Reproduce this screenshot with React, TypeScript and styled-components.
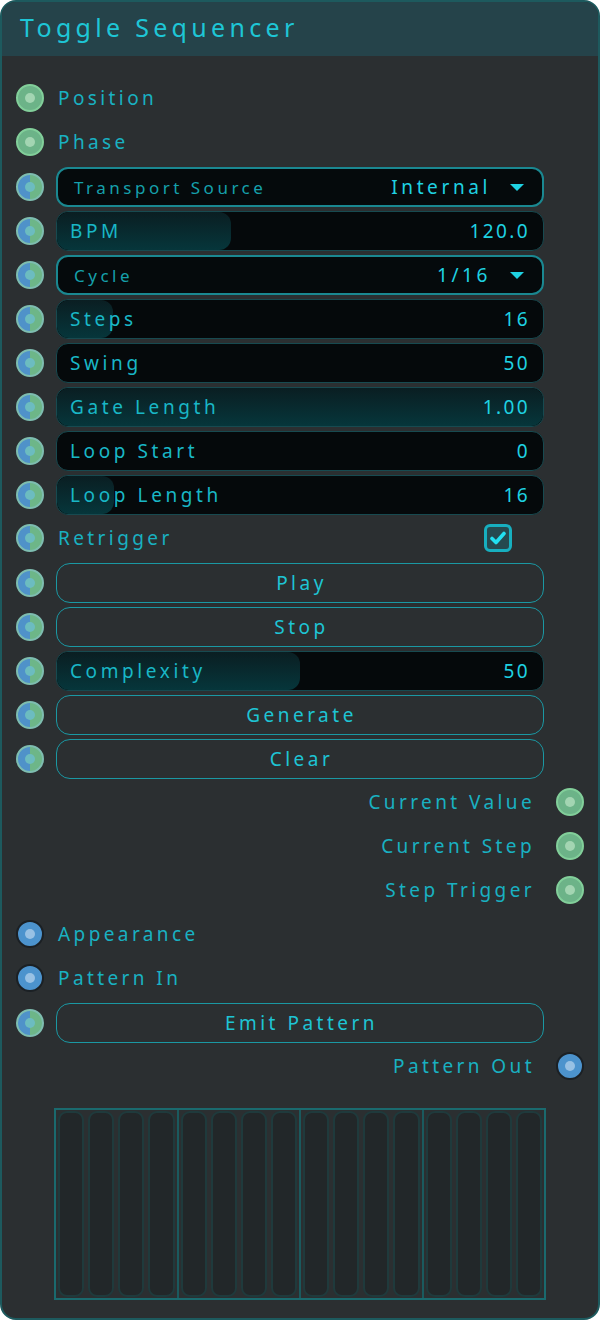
import React from "react";
import styled, { createGlobalStyle, css } from "styled-components";

const Global = createGlobalStyle`
  html, body { margin: 0; padding: 0; background: #ffffff; }
  * { box-sizing: border-box; }
  body { font-family: "Noto Sans", "DejaVu Sans", sans-serif; }
`;

const Node = styled.div`
  width: 600px;
  height: 1320px;
  border: 2px solid #1d5a5e;
  border-radius: 16px;
  background: #2b2f31;
  overflow: hidden;
  display: flex;
  flex-direction: column;
`;

const Header = styled.div`
  height: 54px;
  background: #25434a;
  display: flex;
  align-items: center;
  padding-left: 18px;
  flex-shrink: 0;
`;

const Title = styled.div`
  color: #1ec6d6;
  font-size: 25px;
  letter-spacing: 4.3px;
  padding-bottom: 5px;
`;

const Body = styled.div`
  padding: 23px 14px 18px 14px;
  display: flex;
  flex-direction: column;
  gap: 6px;
  flex: 1;
`;

const Row = styled.div`
  display: grid;
  grid-template-columns: 28px 1fr 28px;
  column-gap: 12px;
  height: 38px;
  align-items: center;
`;

type PortKind = "green" | "split" | "blue";

const Port = styled.div<{ $kind: PortKind }>`
  width: 28px;
  height: 28px;
  border-radius: 50%;
  position: relative;
  ${(p) =>
    p.$kind === "green"
      ? css`
          background: #6cb388;
          border: 2px solid #82cf9a;
        `
      : p.$kind === "blue"
      ? css`
          background: #4c93cd;
          border: 2px solid #1b2024;
        `
      : css`
          background: linear-gradient(90deg, #4f92c9 50%, #6db688 50%);
          border: 2px solid #7ebdb0;
        `}
  &::after {
    content: "";
    position: absolute;
    left: 50%;
    top: 50%;
    width: 10px;
    height: 10px;
    margin: -5px 0 0 -5px;
    border-radius: 50%;
    background: ${(p) =>
      p.$kind === "green" ? "#a3d5b2" : p.$kind === "blue" ? "#98c1e4" : "#6cbcc0"};
  }
`;

const Label = styled.div<{ $right?: boolean }>`
  color: #19b1c1;
  font-size: 19px;
  letter-spacing: 3.4px;
  white-space: nowrap;
  padding-left: ${(p) => (p.$right ? 0 : 2)}px;
  padding-right: ${(p) => (p.$right ? 9 : 0)}px;
  text-align: ${(p) => (p.$right ? "right" : "left")};
  grid-column: 2;
`;

const SelectBox = styled.div`
  grid-column: 2;
  height: 40px;
  border: 2px solid #1a8891;
  border-radius: 12px;
  background: #050a0c;
  display: flex;
  align-items: center;
  padding: 0 18px 0 16px;
`;

const SelectLabel = styled.span`
  color: #15a0ab;
  font-size: 17px;
  letter-spacing: 3.5px;
  flex: 1;
`;

const SelectValue = styled.span`
  color: #1fd2e2;
  font-size: 19px;
  letter-spacing: 3.6px;
  margin-right: 19px;
`;

const Caret = styled.span`
  width: 0;
  height: 0;
  border-left: 7px solid transparent;
  border-right: 7px solid transparent;
  border-top: 7px solid #1fd2e2;
`;

const SliderBox = styled.div`
  grid-column: 2;
  height: 40px;
  border: 1px solid #174a50;
  border-radius: 12px;
  background: #05090b;
  position: relative;
  overflow: hidden;
  display: flex;
  align-items: center;
  padding: 0 13px 0 13px;
`;

const SliderFill = styled.div`
  position: absolute;
  left: 0;
  top: 0;
  bottom: 0;
  border-radius: 12px;
  background: linear-gradient(180deg, #0a1e22 0%, #06363b 100%);
`;

const SliderLabel = styled.span`
  position: relative;
  color: #19b7c6;
  font-size: 19px;
  letter-spacing: 3.6px;
  flex: 1;
`;

const SliderValue = styled.span`
  position: relative;
  color: #1fd2e2;
  font-size: 19px;
  letter-spacing: 2.4px;
`;

const Button = styled.button`
  grid-column: 2;
  height: 40px;
  border: 1px solid #1a98a3;
  border-radius: 14px;
  background: transparent;
  color: #1ec4d4;
  font-family: inherit;
  font-size: 19px;
  letter-spacing: 3.5px;
  padding: 0 0 0 3px;
  cursor: pointer;
`;

const CheckRow = styled.div`
  grid-column: 2;
  display: flex;
  align-items: center;
  justify-content: space-between;
  padding-right: 32px;
`;

const Checkbox = styled.div`
  width: 28px;
  height: 28px;
  border: 3px solid #17afbf;
  border-radius: 6px;
  background: #254a4f;
  display: flex;
  align-items: center;
  justify-content: center;
`;

const PatternGrid = styled.div`
  margin: 17px 0 0 38px;
  width: 492px;
  height: 192px;
  border: 2px solid #1a6a6e;
  display: flex;
`;

const Group = styled.div`
  flex: 1;
  display: flex;
  gap: 4px;
  padding: 1px 2px;
  & + & {
    border-left: 2px solid #1a5a5e;
  }
`;

const Cell = styled.div`
  flex: 1;
  border: 2px solid #1f3a3c;
  border-radius: 9px;
  background: #222729;
`;

type Item =
  | { t: "out-in"; kind: PortKind; label: string }
  | { t: "select"; label: string; value: string }
  | { t: "slider"; label: string; value: string; frac: number }
  | { t: "button"; label: string }
  | { t: "check"; label: string }
  | { t: "output"; kind: PortKind; label: string };

const items: Item[] = [
  { t: "out-in", kind: "green", label: "Position" },
  { t: "out-in", kind: "green", label: "Phase" },
  { t: "select", label: "Transport Source", value: "Internal" },
  { t: "slider", label: "BPM", value: "120.0", frac: 0.357 },
  { t: "select", label: "Cycle", value: "1/16" },
  { t: "slider", label: "Steps", value: "16", frac: 0.115 },
  { t: "slider", label: "Swing", value: "50", frac: 0 },
  { t: "slider", label: "Gate Length", value: "1.00", frac: 1 },
  { t: "slider", label: "Loop Start", value: "0", frac: 0 },
  { t: "slider", label: "Loop Length", value: "16", frac: 0.117 },
  { t: "check", label: "Retrigger" },
  { t: "button", label: "Play" },
  { t: "button", label: "Stop" },
  { t: "slider", label: "Complexity", value: "50", frac: 0.5 },
  { t: "button", label: "Generate" },
  { t: "button", label: "Clear" },
  { t: "output", kind: "green", label: "Current Value" },
  { t: "output", kind: "green", label: "Current Step" },
  { t: "output", kind: "green", label: "Step Trigger" },
  { t: "out-in", kind: "blue", label: "Appearance" },
  { t: "out-in", kind: "blue", label: "Pattern In" },
  { t: "button", label: "Emit Pattern" },
  { t: "output", kind: "blue", label: "Pattern Out" },
];

function renderItem(it: Item, i: number) {
  if (it.t === "output") {
    return (
      <Row key={i}>
        <Label $right>{it.label}</Label>
        <Port $kind={it.kind} />
      </Row>
    );
  }
  if (it.t === "out-in") {
    return (
      <Row key={i}>
        <Port $kind={it.kind} />
        <Label>{it.label}</Label>
      </Row>
    );
  }
  return (
    <Row key={i}>
      <Port $kind="split" />
      {it.t === "select" && (
        <SelectBox>
          <SelectLabel>{it.label}</SelectLabel>
          <SelectValue>{it.value}</SelectValue>
          <Caret />
        </SelectBox>
      )}
      {it.t === "slider" && (
        <SliderBox>
          {it.frac > 0 && <SliderFill style={{ width: `${it.frac * 100}%` }} />}
          <SliderLabel>{it.label}</SliderLabel>
          <SliderValue>{it.value}</SliderValue>
        </SliderBox>
      )}
      {it.t === "button" && <Button>{it.label}</Button>}
      {it.t === "check" && (
        <CheckRow>
          <Label as="span">{it.label}</Label>
          <Checkbox>
            <svg width="16" height="14" viewBox="0 0 16 14">
              <path
                d="M2 7.5 L6 11.5 L14 2.5"
                fill="none"
                stroke="#22e0f0"
                strokeWidth="3.6"
                strokeLinecap="round"
                strokeLinejoin="round"
              />
            </svg>
          </Checkbox>
        </CheckRow>
      )}
    </Row>
  );
}

export default function App() {
  return (
    <>
      <Global />
      <Node>
        <Header>
          <Title>Toggle Sequencer</Title>
        </Header>
        <Body>
          {items.map(renderItem)}
          <PatternGrid>
            {[0, 1, 2, 3].map((g) => (
              <Group key={g}>
                {[0, 1, 2, 3].map((c) => (
                  <Cell key={c} />
                ))}
              </Group>
            ))}
          </PatternGrid>
        </Body>
      </Node>
    </>
  );
}
